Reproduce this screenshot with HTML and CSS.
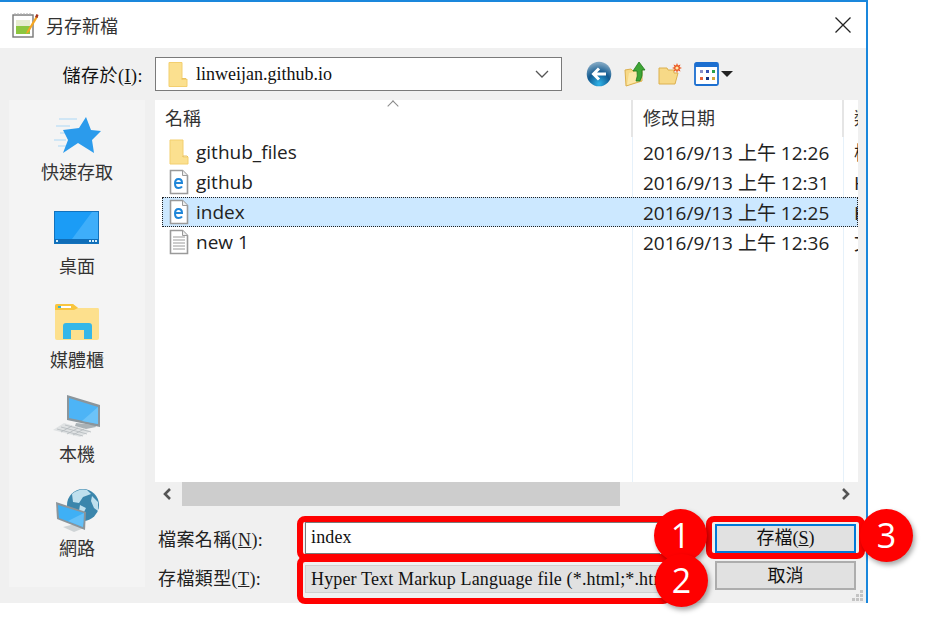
FILE: index.html
```html
<!DOCTYPE html>
<html lang="zh-Hant">
<head>
    <meta charset="UTF-8">
    <meta name="viewport" content="width=device-width, initial-scale=1.0">
    <title>另存新檔</title>
    <link rel="stylesheet" href="styles.css">
</head>
<body>

<svg class="defs" width="0" height="0">
  <symbol id="folder" viewBox="0 0 20 26">
    <path d="M1 1h13v17h5v7H1z" fill="#fbe08f" stroke="#f3cf6f"/>
    <path d="M14 18v-1h4l1 1" fill="none" stroke="#e9c25e"/>
  </symbol>
  <symbol id="efile" viewBox="0 0 20 26">
    <path d="M1.500 1.500h12l5 5v18h-17z" fill="#fff" stroke="#9a9a9a" stroke-width="1.600"/>
    <path d="M13.500 1.500v5h5" fill="#eee" stroke="#9a9a9a"/>
    <path d="M6 14h7q0-4-3.500-4T6 14.500 9.500 19q2.500 0 3.500-1.500" fill="none" stroke="#1f86d9" stroke-width="2"/>
  </symbol>
</svg>

<div class="dialog">

  <!-- Title bar -->
  <div class="titlebar">
    <svg class="title-icon" width="27" height="27" viewBox="0 0 27 27">
      <rect x="1" y="3" width="20" height="22" fill="#fff" stroke="#777" stroke-width="1.400"/>
      <path d="M3 3V1M6 3V1M9 3V1M12 3V1M15 3V1M18 3V1" stroke="#aaa"/>
      <rect x="4" y="14" width="14" height="8" fill="#8cc63f"/>
      <rect x="4" y="8" width="14" height="6" fill="#e6ecd0"/>
      <path d="M15 19l9-15 2 1-9 15-3 2z" fill="#f5a623"/>
      <path d="M23 5l1.500-3 2 1-1 3z" fill="#a3341f"/>
    </svg>
    <span class="title-text">另存新檔</span>
    <svg class="close-icon" width="16" height="16" viewBox="0 0 16 16">
      <path d="M0.500 0.500l15 15M15.500 0.500l-15 15" stroke="#222" stroke-width="1.300"/>
    </svg>
  </div>

  <div class="pane">

    <!-- Save in toolbar -->
    <div class="toolbar">
      <label class="save-in">儲存於(<u>I</u>):</label>
      <div class="combo">
        <svg class="combo-folder" width="20" height="27"><use href="#folder"/></svg>
        <span class="combo-text">linweijan.github.io</span>
        <svg class="combo-arrow" width="14" height="8" viewBox="0 0 14 8">
          <path d="M1 1l6 6 6-6" fill="none" stroke="#555" stroke-width="1.300"/>
        </svg>
      </div>
      <div class="tools">
        <svg width="26" height="26" viewBox="0 0 26 26">
          <defs>
            <radialGradient id="backBall" cx="50%" cy="90%" r="85%">
              <stop offset="0" stop-color="#2fb4ea"/>
              <stop offset="0.55" stop-color="#11598f"/>
              <stop offset="1" stop-color="#7fa6c2"/>
            </radialGradient>
          </defs>
          <circle cx="13" cy="13" r="12.300" fill="url(#backBall)"/>
          <path d="M20 13H8M13 7.500L7.500 13l5.500 5.500" fill="none" stroke="#fff" stroke-width="3"/>
        </svg>
        <svg width="22" height="26" viewBox="0 0 22 26">
          <path d="M1 9l6-1 2 2 9-2v12L2 25z" fill="#f7d987" stroke="#dcb04e"/>
          <path d="M5 12l13-3-1 10-14 5z" fill="#fbe7a8"/>
          <path d="M12 20q2-5 1-10H9l6-9 6 8h-3q1 6-2 11z" fill="#3fa535" stroke="#1f7a1d" stroke-width="0.800"/>
        </svg>
        <svg width="24" height="22" viewBox="0 0 24 22">
          <path d="M1 5h8l1 2h6v3h4l-3 11H1z" fill="#f7d987" stroke="#dcb04e"/>
          <path d="M19 0l1 2.500 2.500-1-1 2.500 2.500 1-2.500 1 1 2.500-2.500-1-1 2.500-1-2.500-2.500 1 1-2.500-2.500-1 2.500-1-1-2.500 2.500 1z" fill="#ec5a24"/>
          <circle cx="19" cy="5" r="1.600" fill="#ffe9a8"/>
        </svg>
        <div class="view-btn">
          <svg width="25" height="24" viewBox="0 0 25 24">
            <rect x="1" y="1" width="23" height="22" rx="1.500" fill="#fff" stroke="#1c6fd0" stroke-width="1.800"/>
            <rect x="1" y="1" width="23" height="4" fill="#1c6fd0"/>
            <rect x="6" y="8" width="3" height="3" fill="#8a8fc7"/>
            <rect x="12" y="8" width="3" height="3" fill="#3955b5"/>
            <rect x="18" y="8" width="3" height="3" fill="#2aa04a"/>
            <rect x="6" y="15" width="3" height="3" fill="#e8623a"/>
            <rect x="12" y="15" width="3" height="3" fill="#12307e"/>
            <rect x="18" y="15" width="3" height="3" fill="#d2a63a"/>
          </svg>
          <span class="caret"></span>
        </div>
      </div>
    </div>

    <div class="main">

      <!-- Places sidebar -->
      <div class="sidebar">
        <div class="place">
          <svg class="place-icon" width="52" height="44" viewBox="0 0 52 44">
            <path d="M8 7h18M5 14h14M9 21h8M3 28h12M7 34h8" stroke="#c3e1f5" stroke-width="1.300"/>
            <path d="M35 5l5 13 10 1-9 9 2 13-16-10-15 10 5-13-5-10 16-2z" fill="#2b9bec"/>
          </svg>
          <span>快速存取</span>
        </div>
        <div class="place">
          <svg class="place-icon" width="46" height="34" viewBox="0 0 46 34">
            <rect x="0.500" y="0.500" width="44" height="32" fill="#1b9cf6" stroke="#1272bd"/>
            <path d="M18 28L38 1h6v27z" fill="#3eaefa"/>
            <rect x="1" y="28" width="43" height="4" fill="#0f6db8"/>
            <path d="M2 29h2v2H2zM35 29h2v2h-2zM38 29h2v2h-2zM41 29h2v2h-2z" fill="#d5eefc"/>
          </svg>
          <span>桌面</span>
        </div>
        <div class="place">
          <svg class="place-icon" width="46" height="38" viewBox="0 0 46 38">
            <path d="M1 3q0-2 2-2h16l5 4h20q1 0 1 2v28q0 2-2 2H3q-2 0-2-2z" fill="#fde08d"/>
            <path d="M1 3q0-2 2-2h16l5 4-4 2H1z" fill="#f8c53f"/>
            <rect x="4" y="3" width="13" height="2" fill="#fff"/>
            <rect x="4" y="3" width="3" height="2" fill="#35b3d8"/>
            <path d="M9 36V23q0-3 3-3h23q3 0 3 3v13H30V27H17v9z" fill="#35b7e8"/>
          </svg>
          <span>媒體櫃</span>
        </div>
        <div class="place">
          <svg class="place-icon" width="50" height="44" viewBox="0 0 50 44">
            <path d="M1 36l11-7 27 8-11 6z" fill="#dfe2e3"/>
            <path d="M5 35l26 7M9 33l26 7M13 31l26 7M9 38l11-6M15 40l11-6M21 41l11-6" stroke="#b4b9bc" stroke-width="0.800"/>
            <path d="M24 29l19 2 1 2-10 2-11-3z" fill="#aab2b6"/>
            <path d="M15 1l33 10v22L15 26z" fill="#8b959b"/>
            <path d="M17 4l29 9v17L17 24z" fill="#4db4f6"/>
            <path d="M30 27l16-14v17z" fill="#6cc3f8"/>
          </svg>
          <span>本機</span>
        </div>
        <div class="place">
          <svg class="place-icon" width="46" height="44" viewBox="0 0 46 44">
            <circle cx="29" cy="17" r="16" fill="#3b86ac"/>
            <path d="M18 6q7-6 15-4l4 4-8 3-4 6-6-1zM38 8l6 6 0 9-4-3-3-7zM26 17l6 3-3 6-4-3z" fill="#bfe0ee"/>
            <path d="M9 39l12-3 9 4-10 4z" fill="#cfd4d6"/>
            <path d="M2 14l30 10-1 18-28-11z" fill="#8b959b"/>
            <path d="M4 17l26 8-1 14-24-9z" fill="#3fb0f5"/>
            <path d="M14 33l16-8-1 14z" fill="#64c0f8"/>
          </svg>
          <span>網路</span>
        </div>
      </div>

      <div class="content">

        <!-- File list -->
        <div class="list">
          <div class="list-head">
            <div class="head-cell head-name">名稱<span class="sort-mark"></span></div>
            <div class="head-cell">修改日期</div>
            <div class="head-cell">類型</div>
          </div>
          <div class="row">
            <div class="cell-name"><svg width="20" height="26"><use href="#folder"/></svg>github_files</div>
            <div class="cell-date">2016/9/13 上午 12:26</div>
            <div class="cell-type">檔案資料夾</div>
          </div>
          <div class="row">
            <div class="cell-name"><svg width="20" height="26"><use href="#efile"/></svg>github</div>
            <div class="cell-date">2016/9/13 上午 12:31</div>
            <div class="cell-type">HTML 文件</div>
          </div>
          <div class="row selected">
            <div class="cell-name"><svg width="20" height="26"><use href="#efile"/></svg>index</div>
            <div class="cell-date">2016/9/13 上午 12:25</div>
            <div class="cell-type">HTML 文件</div>
          </div>
          <div class="row">
            <div class="cell-name">
              <svg width="20" height="26" viewBox="0 0 20 26">
                <path d="M1.500 1.500h12l5 5v18h-17z" fill="#fff" stroke="#9a9a9a" stroke-width="1.600"/>
                <path d="M13.500 1.500v5h5" fill="#eee" stroke="#9a9a9a"/>
                <path d="M4 8h12M4 11h12M4 14h12M4 17h12M4 20h12" stroke="#9a9a9a"/>
              </svg>new 1
            </div>
            <div class="cell-date">2016/9/13 上午 12:36</div>
            <div class="cell-type">文字文件</div>
          </div>
        </div>

        <!-- Horizontal scrollbar -->
        <div class="hscroll">
          <svg width="12" height="14" viewBox="0 0 12 14"><path d="M9 2L4 7l5 5" fill="none" stroke="#555" stroke-width="2.600"/></svg>
          <div class="hscroll-track"><div class="hscroll-thumb"></div></div>
          <svg width="12" height="14" viewBox="0 0 12 14"><path d="M3 2l5 5-5 5" fill="none" stroke="#555" stroke-width="2.600"/></svg>
        </div>

        <!-- File name and type -->
        <form class="save-form">
          <label>檔案名稱(<u>N</u>):</label>
          <div class="field name-field">index</div>
          <button type="button" class="btn btn-default">存檔(<u>S</u>)</button>
          <label>存檔類型(<u>T</u>):</label>
          <div class="field type-field">Hyper Text Markup Language file (*.html;*.htm)</div>
          <button type="button" class="btn">取消</button>
        </form>

      </div>
    </div>

    <svg class="grip" width="14" height="14" viewBox="0 0 14 14">
      <path d="M9 1h3v3H9zM5 5h3v3H5zM9 5h3v3H9zM1 9h3v3H1zM5 9h3v3H5zM9 9h3v3H9z" fill="#c4c4c4"/>
    </svg>
  </div>

  <!-- Red callouts drawn over the dialog -->
  <div class="frame frame-name"></div>
  <div class="frame frame-type"></div>
  <div class="frame frame-save"></div>
  <div class="badge badge-1">1</div>
  <div class="badge badge-2">2</div>
  <div class="badge badge-3">3</div>

</div>

</body>
</html>
```

FILE: styles.css
```css
* {
    box-sizing: border-box;
}

html, body {
    margin: 0;
    height: 100%;
    background-color: #fff;
    overflow: hidden;
}

body {
    font-family: "Noto Sans CJK TC", sans-serif;
    font-size: 18px;
    color: #111;
}

.defs {
    position: absolute;
}

/* Window */
.dialog {
    position: relative;
    width: 868px;
    height: 603px;
    border-top: 2px solid #1a87dc;
    border-right: 2px solid #1a87dc;
    display: flex;
    flex-direction: column;
}

.titlebar {
    height: 46px;
    flex: none;
    display: flex;
    align-items: center;
    padding: 0 15px 0 12px;
    background-color: #fff;
}

.title-text {
    margin-left: 7px;
    line-height: 24px;
    color: #333;
}

.close-icon {
    margin-left: auto;
}

.pane {
    position: relative;
    flex: 1;
    background-color: #f0f0f0;
}

/* Toolbar */
.toolbar {
    height: 52px;
    display: flex;
    align-items: center;
}

.save-in {
    width: 143px;
    text-align: right;
    font-family: "Liberation Serif", "Noto Sans CJK TC", serif;
    letter-spacing: 0.5px;
    margin-right: 12px;
}

.combo {
    width: 407px;
    height: 34px;
    display: flex;
    align-items: center;
    background-color: #fff;
    border: 1px solid #7a7a7a;
    padding: 0 12px;
}

.combo-text {
    margin-left: 8px;
    font-family: "Liberation Serif", serif;
}

.combo-arrow {
    margin-left: auto;
}

.tools {
    display: flex;
    align-items: center;
    gap: 12px;
    margin-left: 24px;
}

.view-btn {
    display: flex;
    align-items: center;
    gap: 2px;
}

.caret {
    width: 0;
    height: 0;
    border-left: 6px solid transparent;
    border-right: 6px solid transparent;
    border-top: 6px solid #222;
}

/* Sidebar */
.main {
    display: flex;
    gap: 10px;
    margin-left: 9px;
}

.sidebar {
    width: 136px;
    height: 487px;
    padding-top: 12px;
    background-color: #f4f4f4;
}

.place {
    height: 94px;
    display: flex;
    flex-direction: column;
    align-items: center;
    color: #333;
}

.place-icon {
    height: 44px;
    margin-bottom: 3px;
}

.place span {
    line-height: 24px;
}

/* File list */
.content {
    width: 703px;
}

.list {
    height: 382px;
    background-color: #fff;
    overflow: hidden;
    background-image: linear-gradient(#e6f1fa, #e6f1fa), linear-gradient(#e6f1fa, #e6f1fa);
    background-size: 1px 100%;
    background-position: 477px 0, 688px 0;
    background-repeat: no-repeat;
}

.list-head {
    height: 37px;
    display: grid;
    grid-template-columns: 478px 211px 14px;
    background-color: #fff;
    font-size: 18px;
    color: #333;
}

.head-cell {
    position: relative;
    line-height: 35px;
    padding-left: 10px;
    white-space: nowrap;
    overflow: hidden;
    border-right: 2px solid #e5e5e5;
}

.head-cell:last-child {
    border-right: none;
}

.sort-mark {
    position: absolute;
    left: 234px;
    top: 2px;
    width: 8px;
    height: 8px;
    border-left: 1.5px solid #888;
    border-top: 1.5px solid #888;
    transform: rotate(45deg);
}

.row {
    height: 30px;
    margin-left: 7px;
    display: grid;
    grid-template-columns: 470px 211px 15px;
    align-items: center;
    font-family: "Open Sans", "Noto Sans CJK TC", sans-serif;
    font-size: 19px;
    color: #222;
    white-space: nowrap;
    overflow: hidden;
}

.row.selected {
    background-color: #cce8ff;
    outline: 1px dotted #222;
    outline-offset: -1px;
}

.cell-name {
    display: flex;
    align-items: center;
    gap: 7px;
    padding-left: 7px;
}

.cell-date {
    padding-left: 11px;
}

.cell-type {
    padding-left: 11px;
    overflow: hidden;
}

/* Scrollbar */
.hscroll {
    height: 24px;
    display: flex;
    align-items: center;
    padding: 0 6px;
}

.hscroll-track {
    flex: 1;
    height: 24px;
    padding-left: 9px;
}

.hscroll-thumb {
    width: 438px;
    height: 24px;
    background-color: #cdcdcd;
}

/* Form at the bottom */
.save-form {
    display: grid;
    grid-template-columns: 150px 355px 1fr;
    grid-template-rows: 32px 32px;
    row-gap: 7px;
    margin-top: 16px;
    padding-right: 2px;
    font-family: "Liberation Serif", "Noto Sans CJK TC", serif;
    letter-spacing: 0.15px;
}

.save-form label {
    align-self: center;
    padding-left: 3px;
    letter-spacing: 0.4px;
    color: #222;
}

.field {
    white-space: nowrap;
    overflow: hidden;
    padding-left: 5px;
}

.name-field {
    background-color: #fff;
    line-height: 29px;
    border: 1px solid #7a7a7a;
    border-right: none;
}

.type-field {
    align-self: end;
    height: 28px;
    line-height: 26px;
    background-color: #e1e1e1;
    border: 1px solid #cfcfcf;
    border-right: none;
}

.btn {
    justify-self: end;
    width: 141px;
    height: 29px;
    padding: 0;
    background-color: #e1e1e1;
    border: 2px solid #adadad;
    font-family: inherit;
    font-size: 18px;
    line-height: 24px;
    color: #111;
}

.btn-default {
    align-self: center;
    border-color: #0078d7;
}

.grip {
    position: absolute;
    right: 1px;
    bottom: 0;
}

/* Callouts */
.frame {
    position: absolute;
    border: 6px solid #f00;
    border-radius: 8px;
}

.frame-name {
    left: 297px;
    top: 514px;
    width: 374px;
    height: 44px;
}

.frame-type {
    left: 297px;
    top: 554px;
    width: 374px;
    height: 48px;
}

.frame-save {
    left: 706px;
    top: 514px;
    width: 159px;
    height: 43px;
}

.badge {
    position: absolute;
    width: 53px;
    height: 53px;
    border-radius: 50%;
    background-color: #f00;
    color: #fff;
    font-family: "Open Sans", sans-serif;
    font-size: 34px;
    line-height: 53px;
    text-align: center;
    box-shadow: 2px 3px 5px rgba(0,0,0,0.35);
}

.badge-1 {
    left: 654px;
    top: 507px;
}

.badge-2 {
    left: 655px;
    top: 552px;
}

.badge-3 {
    left: 860px;
    top: 507px;
}
```
